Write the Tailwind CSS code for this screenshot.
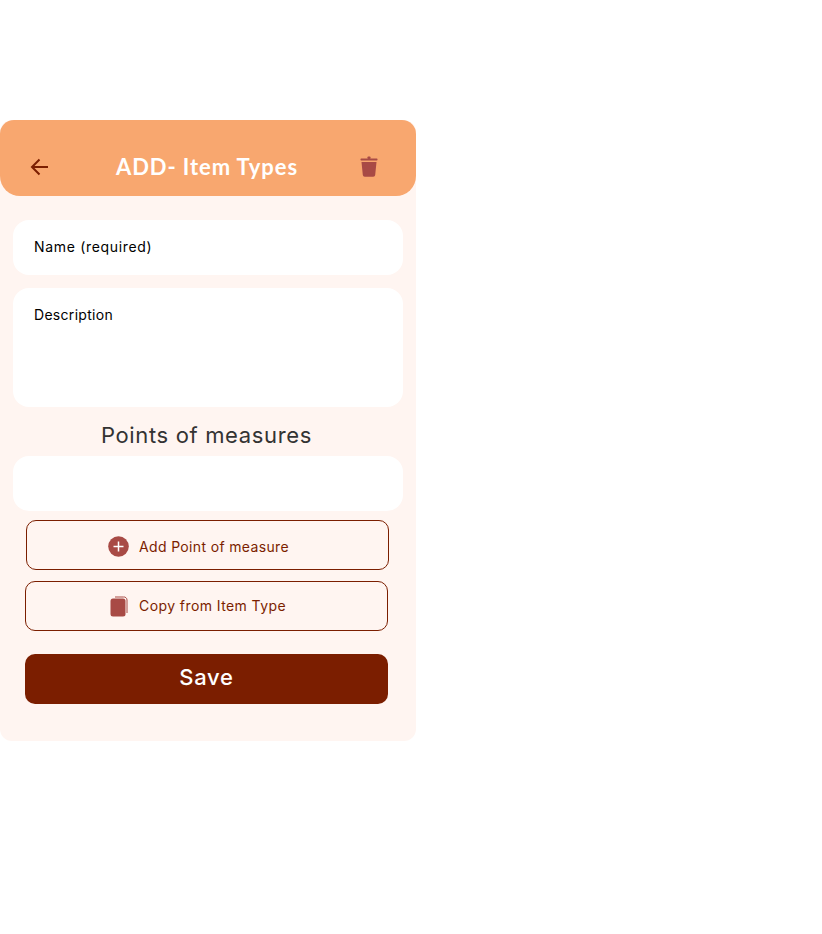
<!DOCTYPE html>
<html>
<head>
<meta charset="utf-8">
<script src="https://cdn.jsdelivr.net/npm/@tailwindcss/browser@4"></script>
</head>
<body class="bg-white font-['Inter','Noto_Sans',sans-serif]">
<div class="pt-[120px] w-[822px] h-[934px]">
  <main class="w-[416px] h-[621px] bg-[#fff5f1] rounded-[12px] flex flex-col">
    <header class="h-[76px] shrink-0 bg-[#f8a76f] rounded-t-[14px] rounded-b-[20px] flex items-center justify-between pt-[17px] pl-[30px] pr-[38px]">
      <svg width="19" height="18" viewBox="0 0 19 18" fill="none" stroke="#7b1e00" stroke-width="2"><path d="M18 9H2M9.500 1.500L2 9l7.500 7.500"/></svg>
      <h1 class="ml-[5px] font-['Lato',sans-serif] font-bold text-[22px] leading-[28px] tracking-[0.92px] text-white">ADD- Item Types</h1>
      <svg width="18" height="21" viewBox="0 0 18 21" fill="#a84a45"><rect x="0.500" y="2.500" width="17" height="2" rx="0.700"/><rect x="7.500" y="0.500" width="3" height="2.500" rx="0.800"/><path d="M1.500 6h15l-1.300 13a2 2 0 0 1-2 1.800H4.800a2 2 0 0 1-2-1.800z"/></svg>
    </header>
    <div class="flex flex-col pt-[24px] px-[13px]">
      <div class="h-[55px] w-[390px] bg-white rounded-[16px] pl-[21px] pt-[16px] text-[14px] leading-[22px] tracking-[0.68px] text-black">Name (required)</div>
      <div class="mt-[13px] h-[119px] w-[390px] bg-white rounded-[16px] pl-[21px] pt-[16px] text-[14px] leading-[22px] tracking-[0.3px] text-black">Description</div>
      <h2 class="mt-[13px] h-[30px] w-[387px] text-center text-[22px] leading-[30px] font-normal tracking-[0.65px] text-[#333333]">Points of measures</h2>
      <div class="mt-[6px] h-[55px] w-[390px] bg-white rounded-[16px]"></div>
      <button class="mt-[9px] ml-[13px] h-[50px] w-[363px] border border-[#7b1e00] rounded-[10px] flex items-center pl-[81px] pt-[3px] gap-[10px] text-[14px] tracking-[0.35px] text-[#7b1e00]">
        <svg width="21" height="21" viewBox="0 0 21 21"><circle cx="10.500" cy="10.500" r="10.300" fill="#a84a45"/><path d="M10.500 5.500v10M5.500 10.500h10" stroke="#fff" stroke-width="1.500"/></svg>
        <span>Add Point of measure</span>
      </button>
      <button class="mt-[11px] ml-[12px] h-[50px] w-[363px] border border-[#7b1e00] rounded-[10px] flex items-center pl-[84px] gap-[11px] text-[14px] tracking-[0.42px] text-[#7b1e00]">
        <svg width="18" height="21" viewBox="0 0 18 21"><path d="M5 1h8.500A3 3 0 0 1 17 4v13" fill="none" stroke="#a84a45" stroke-width="1"/><rect x="0.500" y="2.500" width="15" height="18" rx="2.500" fill="#a84a45"/></svg>
        <span class="-mt-[2px]">Copy from Item Type</span>
      </button>
      <button class="mt-[23px] ml-[12px] h-[50px] w-[363px] bg-[#7b1e00] rounded-[10px] pb-[3px] text-white text-[22px] font-medium tracking-[0.7px] flex items-center justify-center">Save</button>
    </div>
  </main>
</div>
</body>
</html>
